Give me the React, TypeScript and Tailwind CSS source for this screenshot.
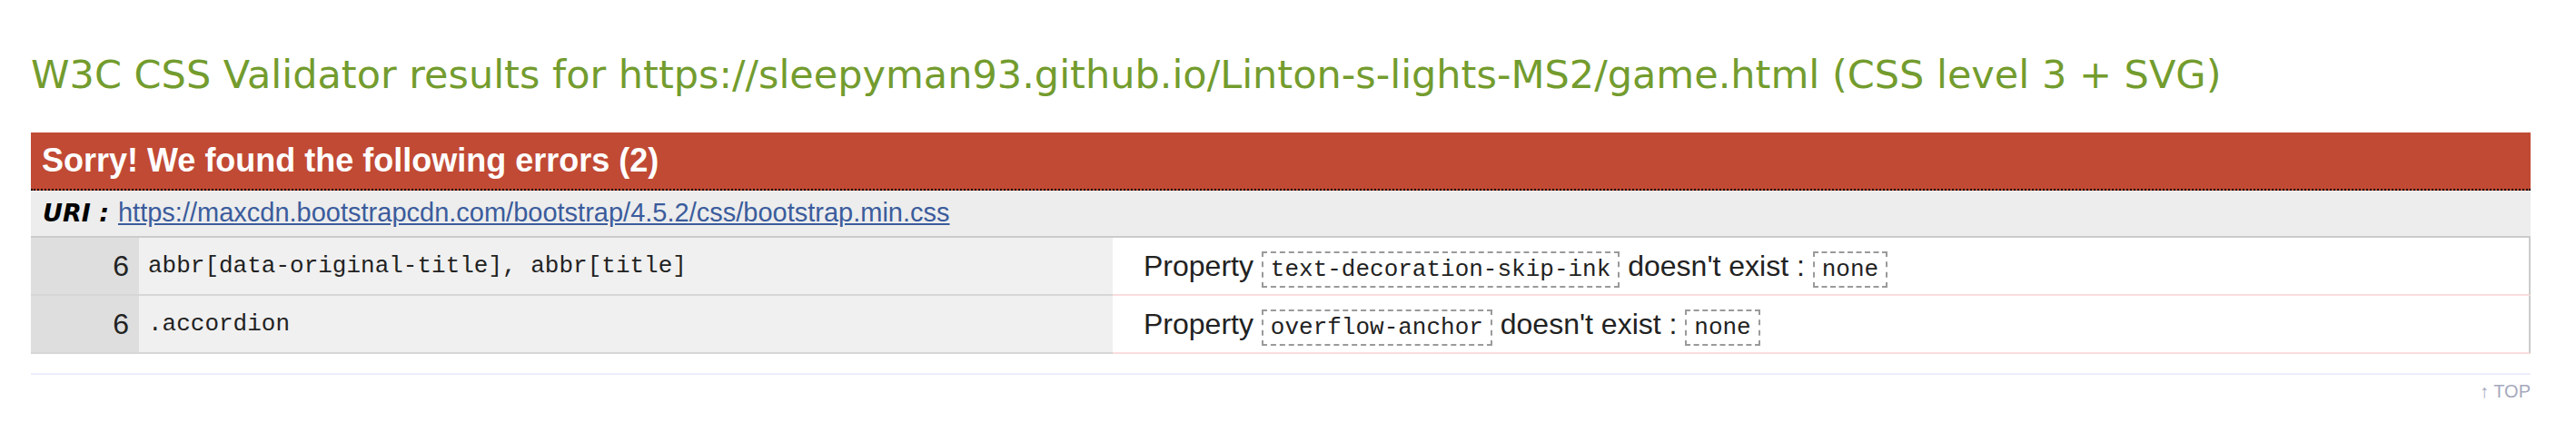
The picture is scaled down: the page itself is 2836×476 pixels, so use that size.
const errors = [
  {
    line: 6,
    selector: 'abbr[data-original-title], abbr[title]',
    property: 'text-decoration-skip-ink',
    value: 'none',
  },
  { line: 6, selector: '.accordion', property: 'overflow-anchor', value: 'none' },
];

function Code({ children }: { children: string }) {
  return (
    <span className="inline-block border-2 border-dashed border-[#9a9a9a] px-[8px] py-[3px] font-['Liberation_Mono',monospace] text-[26px] leading-[30px] text-[#222]">
      {children}
    </span>
  );
}

export default function App() {
  return (
    <div className="min-h-[476px] bg-white pl-[34px] pr-[50px] pt-[57px] font-['Liberation_Sans',Arial,sans-serif]">
      <h2 className="whitespace-nowrap font-['DejaVu_Sans',Verdana,sans-serif] text-[43px] font-normal leading-[50px] text-[#739c2e]">
        W3C CSS Validator results for https://sleepyman93.github.io/Linton-s-lights-MS2/game.html (CSS level 3 + SVG)
      </h2>

      <div className="mt-[39px]">
        {/* error heading */}
        <div className="flex h-[64px] items-center border-b-2 border-dotted border-black bg-[#c14a34] pl-[12px] text-[36px] font-bold text-white">
          Sorry! We found the following errors (2)
        </div>

        {/* uri row */}
        <div className="flex h-[52px] items-center gap-[10px] border-b-2 border-[#cbcbcb] bg-[#ededed] pl-[13px]">
          <span className="font-['DejaVu_Sans',Verdana,sans-serif] text-[27px] font-bold italic text-black">
            URI :
          </span>
          <a className="text-[29px] text-[#3b5c9c] underline">
            https://maxcdn.bootstrapcdn.com/bootstrap/4.5.2/css/bootstrap.min.css
          </a>
        </div>

        {/* error rows */}
        {errors.map((e, i) => (
          <div key={i} className="grid h-[64px] grid-cols-[119px_1072px_1fr]">
            <div className="flex items-center justify-end border-b-2 border-[#d6d6d6] bg-[#dedede] pr-[11px] text-[32px] text-[#222]">
              {e.line}
            </div>
            <div className="flex items-center border-b-2 border-[#d6d6d6] bg-[#f0f0f0] pl-[10px] font-['Liberation_Mono',monospace] text-[26px] text-[#222]">
              {e.selector}
            </div>
            <div className="flex items-center border-b-2 border-r-2 border-b-[#fbdddd] border-r-[#cbcbcb] bg-white pl-[34px] text-[32px] text-[#222]">
              <p className="whitespace-nowrap">
                Property <Code>{e.property}</Code> doesn&apos;t exist : <Code>{e.value}</Code>
              </p>
            </div>
          </div>
        ))}
      </div>

      <div className="mt-[21px] border-t-2 border-[#eeeefb]" />
      <div className="mt-[6px] text-right text-[20px] leading-[24px] text-[#a6a9bd]">↑ TOP</div>
    </div>
  );
}
